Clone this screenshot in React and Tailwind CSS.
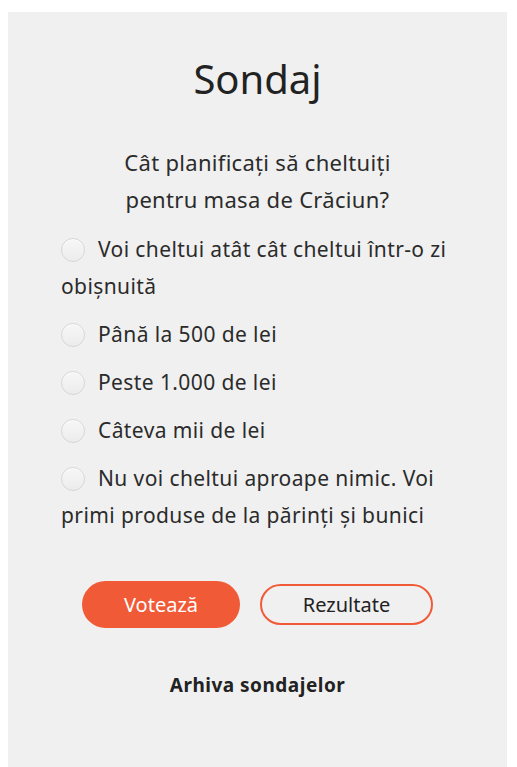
import React from 'react';

const options = [
  'Voi cheltui atât cât cheltui într-o zi obișnuită',
  'Până la 500 de lei',
  'Peste 1.000 de lei',
  'Câteva mii de lei',
  'Nu voi cheltui aproape nimic. Voi primi produse de la părinți și bunici',
];

const PollWidget = () => {
  return (
    <div className="min-h-[767px] bg-white pt-3 px-2 font-['Noto_Sans',sans-serif] text-[#2b2b2b]">
      <div className="w-[499px] min-h-[755px] bg-[#f0f0f0] px-[53px] pt-[43px]">
        <h2 className="text-center text-[40px] leading-[48px] text-[#222]">Sondaj</h2>

        <p className="mt-[41px] text-center text-[22px] leading-[37px] tracking-[0.3px]">
          Cât planificați să cheltuiți
          <br />
          pentru masa de Crăciun?
        </p>

        <div className="mt-[13px] flex flex-col gap-[11px]">
          {options.map((opt) => (
            <label key={opt} className="block text-[21px] leading-[37px] tracking-[0.4px]">
              <span className="inline-block w-6 h-6 mr-[13px] align-[-5px] rounded-full border border-[#d6d6d6] bg-gradient-to-b from-[#f7f7f7] to-[#ececec] shadow-[inset_0_1px_1px_rgba(255,255,255,0.8)]"></span>
              {opt}
            </label>
          ))}
        </div>

        <div className="mt-[47px] flex items-center justify-center gap-5">
          <button className="w-[158px] h-[47px] rounded-full bg-[#f15a36] text-white text-[20px]">
            Votează
          </button>
          <button className="w-[173px] h-[41px] rounded-full border-2 border-[#f15a36] text-[20px] text-[#222]">
            Rezultate
          </button>
        </div>

        <p className="mt-[43px] text-center text-[19px] tracking-[0.5px] font-bold text-[#222]">Arhiva sondajelor</p>
      </div>
    </div>
  );
};

export default PollWidget;
